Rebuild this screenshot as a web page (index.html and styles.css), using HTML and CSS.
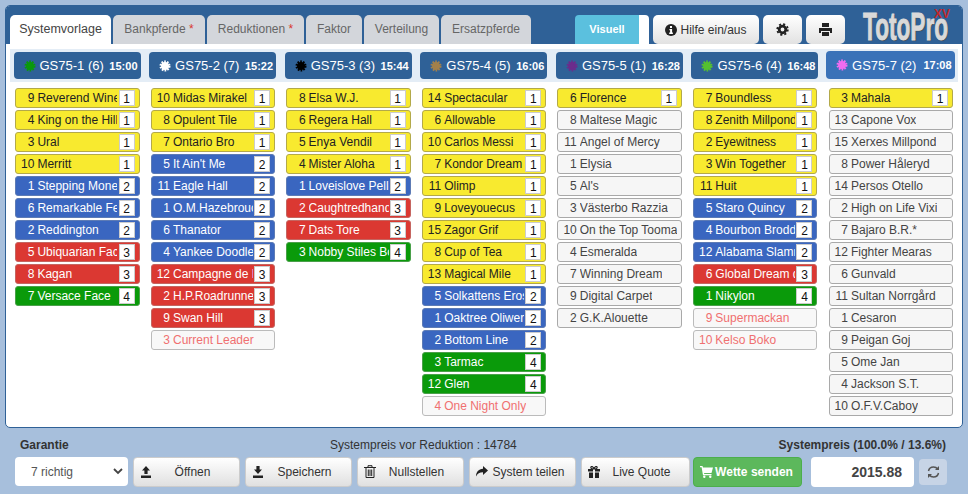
FILE: index.html
```html
<!DOCTYPE html>
<html lang="en">
<head>
    <meta charset="UTF-8">
    <title>TotoPro</title>
    <link rel="stylesheet" href="styles.css">
</head>
<body>
    <svg class="defs" width="0" height="0">
        <symbol id="burst" viewBox="0 0 16 16"><circle cx="8" cy="8" r="4.6" fill="currentColor" stroke="currentColor" stroke-width="3.4" stroke-dasharray="1.7 1.2"/></symbol>
    </svg>
    <div class="panel">
        <div class="topbar">
            <div class="tabs">
                <div class="tab active">Systemvorlage</div>
                <div class="tab">Bankpferde <span class="star">*</span></div>
                <div class="tab">Reduktionen <span class="star">*</span></div>
                <div class="tab">Faktor</div>
                <div class="tab">Verteilung</div>
                <div class="tab">Ersatzpferde</div>
            </div>
            <div class="tools">
                <div class="toggle"><span class="toggle-on">Visuell</span><span class="toggle-off"></span></div>
                <div class="tool help">
                    <svg width="12" height="12" viewBox="0 0 12 12"><circle cx="6" cy="6" r="6" fill="#222"/><rect x="5" y="2" width="2" height="2" fill="#fff"/><path d="M4.400 5h2.700v3.600h.8V10H4.200V8.600h.9V6.300h-.7z" fill="#fff"/></svg>
                    Hilfe ein/aus
                </div>
                <div class="tool square">
                    <svg width="13" height="13" viewBox="0 0 13 13"><circle cx="6.500" cy="6.500" r="3.300" fill="none" stroke="#222" stroke-width="2.800"/><circle cx="6.500" cy="6.500" r="5.300" fill="none" stroke="#222" stroke-width="1.800" stroke-dasharray="2.100 2.060"/></svg>
                </div>
                <div class="tool square">
                    <svg width="13" height="13" viewBox="0 0 13 13"><path d="M3 0h7v4H3zM0 5h13v5h-2V8H2v2H0zM3 9h7v4H3z" fill="#222"/></svg>
                </div>
            </div>
            <div class="logo"><span class="logo-text">TotoPro</span><span class="logo-xv">XV</span></div>
        </div>
        <div class="content">
            <div class="races">
                <div class="race"><svg class="dot dot-green" width="14" height="14"><use href="#burst"/></svg><span class="race-name">GS75-1 (6)</span><span class="race-time">15:00</span></div>
                <div class="race"><svg class="dot dot-white" width="14" height="14"><use href="#burst"/></svg><span class="race-name">GS75-2 (7)</span><span class="race-time">15:22</span></div>
                <div class="race"><svg class="dot dot-black" width="14" height="14"><use href="#burst"/></svg><span class="race-name">GS75-3 (3)</span><span class="race-time">15:44</span></div>
                <div class="race"><svg class="dot dot-brown" width="14" height="14"><use href="#burst"/></svg><span class="race-name">GS75-4 (5)</span><span class="race-time">16:06</span></div>
                <div class="race"><svg class="dot dot-purple" width="14" height="14"><use href="#burst"/></svg><span class="race-name">GS75-5 (1)</span><span class="race-time">16:28</span></div>
                <div class="race"><svg class="dot dot-lime" width="14" height="14"><use href="#burst"/></svg><span class="race-name">GS75-6 (4)</span><span class="race-time">16:48</span></div>
                <div class="race current"><svg class="dot dot-pink" width="14" height="14"><use href="#burst"/></svg><span class="race-name">GS75-7 (2)</span><span class="race-time">17:08</span></div>
            </div>
            <div class="columns">
                <div class="col">
                    <div class="horse yellow"><span class="no">9</span><span class="name">Reverend Wine</span><span class="rank">1</span></div>
                    <div class="horse yellow"><span class="no">4</span><span class="name">King on the Hill</span><span class="rank">1</span></div>
                    <div class="horse yellow"><span class="no">3</span><span class="name">Ural</span><span class="rank">1</span></div>
                    <div class="horse yellow"><span class="no">10</span><span class="name">Merritt</span><span class="rank">1</span></div>
                    <div class="horse blue"><span class="no">1</span><span class="name">Stepping Money</span><span class="rank">2</span></div>
                    <div class="horse blue"><span class="no">6</span><span class="name">Remarkable Fella</span><span class="rank">2</span></div>
                    <div class="horse blue"><span class="no">2</span><span class="name">Reddington</span><span class="rank">2</span></div>
                    <div class="horse red"><span class="no">5</span><span class="name">Ubiquarian Face</span><span class="rank">3</span></div>
                    <div class="horse red"><span class="no">8</span><span class="name">Kagan</span><span class="rank">3</span></div>
                    <div class="horse green"><span class="no">7</span><span class="name">Versace Face</span><span class="rank">4</span></div>
                </div>
                <div class="col">
                    <div class="horse yellow"><span class="no">10</span><span class="name">Midas Mirakel</span><span class="rank">1</span></div>
                    <div class="horse yellow"><span class="no">8</span><span class="name">Opulent Tile</span><span class="rank">1</span></div>
                    <div class="horse yellow"><span class="no">7</span><span class="name">Ontario Bro</span><span class="rank">1</span></div>
                    <div class="horse blue"><span class="no">5</span><span class="name">It Ain't Me</span><span class="rank">2</span></div>
                    <div class="horse blue"><span class="no">11</span><span class="name">Eagle Hall</span><span class="rank">2</span></div>
                    <div class="horse blue"><span class="no">1</span><span class="name">O.M.Hazebrouck</span><span class="rank">2</span></div>
                    <div class="horse blue"><span class="no">6</span><span class="name">Thanator</span><span class="rank">2</span></div>
                    <div class="horse blue"><span class="no">4</span><span class="name">Yankee Doodle</span><span class="rank">2</span></div>
                    <div class="horse red"><span class="no">12</span><span class="name">Campagne de Luxe</span><span class="rank">3</span></div>
                    <div class="horse red"><span class="no">2</span><span class="name">H.P.Roadrunner</span><span class="rank">3</span></div>
                    <div class="horse red"><span class="no">9</span><span class="name">Swan Hill</span><span class="rank">3</span></div>
                    <div class="horse out"><span class="no">3</span><span class="name">Current Leader</span></div>
                </div>
                <div class="col">
                    <div class="horse yellow"><span class="no">8</span><span class="name">Elsa W.J.</span><span class="rank">1</span></div>
                    <div class="horse yellow"><span class="no">6</span><span class="name">Regera Hall</span><span class="rank">1</span></div>
                    <div class="horse yellow"><span class="no">5</span><span class="name">Enya Vendil</span><span class="rank">1</span></div>
                    <div class="horse yellow"><span class="no">4</span><span class="name">Mister Aloha</span><span class="rank">1</span></div>
                    <div class="horse blue"><span class="no">1</span><span class="name">Loveislove Pellini</span><span class="rank">2</span></div>
                    <div class="horse red"><span class="no">2</span><span class="name">Caughtredhanded</span><span class="rank">3</span></div>
                    <div class="horse red"><span class="no">7</span><span class="name">Dats Tore</span><span class="rank">3</span></div>
                    <div class="horse green"><span class="no">3</span><span class="name">Nobby Stiles Boko</span><span class="rank">4</span></div>
                </div>
                <div class="col">
                    <div class="horse yellow"><span class="no">14</span><span class="name">Spectacular</span><span class="rank">1</span></div>
                    <div class="horse yellow"><span class="no">6</span><span class="name">Allowable</span><span class="rank">1</span></div>
                    <div class="horse yellow"><span class="no">10</span><span class="name">Carlos Messi</span><span class="rank">1</span></div>
                    <div class="horse yellow"><span class="no">7</span><span class="name">Kondor Dream</span><span class="rank">1</span></div>
                    <div class="horse yellow"><span class="no">11</span><span class="name">Olimp</span><span class="rank">1</span></div>
                    <div class="horse yellow"><span class="no">9</span><span class="name">Loveyouecus</span><span class="rank">1</span></div>
                    <div class="horse yellow"><span class="no">15</span><span class="name">Zagor Grif</span><span class="rank">1</span></div>
                    <div class="horse yellow"><span class="no">8</span><span class="name">Cup of Tea</span><span class="rank">1</span></div>
                    <div class="horse yellow"><span class="no">13</span><span class="name">Magical Mile</span><span class="rank">1</span></div>
                    <div class="horse blue"><span class="no">5</span><span class="name">Solkattens Eros</span><span class="rank">2</span></div>
                    <div class="horse blue"><span class="no">1</span><span class="name">Oaktree Oliwer</span><span class="rank">2</span></div>
                    <div class="horse blue"><span class="no">2</span><span class="name">Bottom Line</span><span class="rank">2</span></div>
                    <div class="horse green"><span class="no">3</span><span class="name">Tarmac</span><span class="rank">4</span></div>
                    <div class="horse green"><span class="no">12</span><span class="name">Glen</span><span class="rank">4</span></div>
                    <div class="horse out"><span class="no">4</span><span class="name">One Night Only</span></div>
                </div>
                <div class="col">
                    <div class="horse yellow"><span class="no">6</span><span class="name">Florence</span><span class="rank">1</span></div>
                    <div class="horse plain"><span class="no">8</span><span class="name">Maltese Magic</span></div>
                    <div class="horse plain"><span class="no">11</span><span class="name">Angel of Mercy</span></div>
                    <div class="horse plain"><span class="no">1</span><span class="name">Elysia</span></div>
                    <div class="horse plain"><span class="no">5</span><span class="name">Al's</span></div>
                    <div class="horse plain"><span class="no">3</span><span class="name">Västerbo Razzia</span></div>
                    <div class="horse plain"><span class="no">10</span><span class="name">On the Top Tooma</span></div>
                    <div class="horse plain"><span class="no">4</span><span class="name">Esmeralda</span></div>
                    <div class="horse plain"><span class="no">7</span><span class="name">Winning Dream</span></div>
                    <div class="horse plain"><span class="no">9</span><span class="name">Digital Carpet</span></div>
                    <div class="horse plain"><span class="no">2</span><span class="name">G.K.Alouette</span></div>
                </div>
                <div class="col">
                    <div class="horse yellow"><span class="no">7</span><span class="name">Boundless</span><span class="rank">1</span></div>
                    <div class="horse yellow"><span class="no">8</span><span class="name">Zenith Millpond</span><span class="rank">1</span></div>
                    <div class="horse yellow"><span class="no">2</span><span class="name">Eyewitness</span><span class="rank">1</span></div>
                    <div class="horse yellow"><span class="no">3</span><span class="name">Win Together</span><span class="rank">1</span></div>
                    <div class="horse yellow"><span class="no">11</span><span class="name">Huit</span><span class="rank">1</span></div>
                    <div class="horse blue"><span class="no">5</span><span class="name">Staro Quincy</span><span class="rank">2</span></div>
                    <div class="horse blue"><span class="no">4</span><span class="name">Bourbon Broddi</span><span class="rank">2</span></div>
                    <div class="horse blue"><span class="no">12</span><span class="name">Alabama Slammer</span><span class="rank">2</span></div>
                    <div class="horse red"><span class="no">6</span><span class="name">Global Dream d</span><span class="rank">3</span></div>
                    <div class="horse green"><span class="no">1</span><span class="name">Nikylon</span><span class="rank">4</span></div>
                    <div class="horse out"><span class="no">9</span><span class="name">Supermackan</span></div>
                    <div class="horse out"><span class="no">10</span><span class="name">Kelso Boko</span></div>
                </div>
                <div class="col">
                    <div class="horse yellow"><span class="no">3</span><span class="name">Mahala</span><span class="rank">1</span></div>
                    <div class="horse plain"><span class="no">13</span><span class="name">Capone Vox</span></div>
                    <div class="horse plain"><span class="no">15</span><span class="name">Xerxes Millpond</span></div>
                    <div class="horse plain"><span class="no">8</span><span class="name">Power Håleryd</span></div>
                    <div class="horse plain"><span class="no">14</span><span class="name">Persos Otello</span></div>
                    <div class="horse plain"><span class="no">2</span><span class="name">High on Life Vixi</span></div>
                    <div class="horse plain"><span class="no">7</span><span class="name">Bajaro B.R.*</span></div>
                    <div class="horse plain"><span class="no">12</span><span class="name">Fighter Mearas</span></div>
                    <div class="horse plain"><span class="no">6</span><span class="name">Gunvald</span></div>
                    <div class="horse plain"><span class="no">11</span><span class="name">Sultan Norrgård</span></div>
                    <div class="horse plain"><span class="no">1</span><span class="name">Cesaron</span></div>
                    <div class="horse plain"><span class="no">9</span><span class="name">Peigan Goj</span></div>
                    <div class="horse plain"><span class="no">5</span><span class="name">Ome Jan</span></div>
                    <div class="horse plain"><span class="no">4</span><span class="name">Jackson S.T.</span></div>
                    <div class="horse plain"><span class="no">10</span><span class="name">O.F.V.Caboy</span></div>
                </div>
            </div>
        </div>
    </div>
    <div class="footer">
        <div class="labels">
            <span class="label-left">Garantie</span>
            <span class="label-mid">Systempreis vor Reduktion : 14784</span>
            <span class="label-right">Systempreis (100.0% / 13.6%)</span>
        </div>
        <div class="controls">
            <div class="select">7 richtig
                <svg width="10" height="7" viewBox="0 0 10 7"><path d="M1 1l4 4 4-4" fill="none" stroke="#444" stroke-width="1.800"/></svg>
            </div>
            <div class="btn"><svg width="12" height="12" viewBox="0 0 12 12"><path d="M6 0l4 4.500H7.600V8H4.400V4.500H2zM1 9.500h10V12H1z" fill="#222"/></svg><span>Öffnen</span></div>
            <div class="btn"><svg width="12" height="12" viewBox="0 0 12 12"><path d="M4.400 0h3.200v3.500H10L6 8 2 3.500h2.400zM1 9.500h10V12H1z" fill="#222"/></svg><span>Speichern</span></div>
            <div class="btn"><svg width="12" height="13" viewBox="0 0 12 13"><path d="M0 2.500h12M4 2.500V.7h4v1.800M2 3v9.500h8V3M4.300 4.500v6.500M6 4.500v6.500M7.700 4.500v6.500" fill="none" stroke="#222"/></svg><span>Nullstellen</span></div>
            <div class="btn"><svg width="12" height="11" viewBox="0 0 12 11"><path d="M7 0l5 4.500L7 9V6.300C3.500 6.300 1.500 7.500 0 10.500 0 6 2.500 3 7 2.700z" fill="#222"/></svg><span>System teilen</span></div>
            <div class="btn btn-wide"><svg width="12" height="12" viewBox="0 0 12 12"><path d="M0 3h5v2.500H0zM7 3h5v2.500H7zM1 6.500h4V12H1zM7 6.500h4V12H7z" fill="#222"/><path d="M5.500 3C3.500 3 2.500 2 3 1s2.500-.5 3 2c.5-2.500 2.500-3 3-2s-.5 2-2.500 2z" fill="none" stroke="#222" stroke-width="1.200"/></svg><span>Live Quote</span></div>
            <div class="btn btn-send"><svg width="13" height="12" viewBox="0 0 13 12"><path d="M0 0h2.500l.5 1.500h10L11.500 7H4l.3 1h7.200v1.200H3L1.600 1.300H0z" fill="#fff"/><circle cx="4.300" cy="10.800" r="1.200" fill="#fff"/><circle cx="10.300" cy="10.800" r="1.200" fill="#fff"/></svg><span>Wette senden</span></div>
            <div class="price">2015.88</div>
            <div class="refresh"><svg width="13" height="12" viewBox="0 0 13 12"><path d="M1.500 5C2 2.500 4 1 6.500 1c1.800 0 3.200.7 4.200 2M11.500 7c-.5 2.500-2.500 4-5 4-1.800 0-3.200-.7-4.200-2" fill="none" stroke="#555" stroke-width="1.500"/><path d="M12 0v4H8zM1 12V8h4z" fill="#555"/></svg></div>
        </div>
    </div>
</body>
</html>
```

FILE: styles.css
```css
* {
    box-sizing: border-box;
    margin: 0;
    padding: 0;
}
body {
    font-family: "Liberation Sans", Arial, sans-serif;
    font-size: 12px;
    background-color: #a7bfdc;
    color: #333;
    height: 494px;
    overflow: hidden;
    padding: 5px 5px 0;
}
.defs {
    display: block;
    height: 0;
}

.panel {
    width: 958px;
    height: 423px;
    border: 1px solid #2f6197;
    border-radius: 5px;
    background: #fff;
    overflow: hidden;
}
.topbar {
    position: relative;
    height: 38px;
    background: #2f6197;
    padding: 9px 0 0 4px;
    display: flex;
}
.tabs {
    flex: none;
    display: grid;
    grid-template-columns: 101px 92px 97px 56px 75px 90px;
    gap: 2px;
    width: 565px;
}
.tab {
    height: 29px;
    line-height: 28px;
    text-align: center;
    color: #666;
    background: #d3d6db;
    border-radius: 5px 5px 0 0;
    white-space: nowrap;
}
.tab.active {
    font-size: 12.5px;
    background: #fff;
    color: #444;
}
.star {
    color: #d9362e;
}
.tools {
    flex: none;
    display: flex;
    gap: 4px;
    height: 29px;
}
.toggle {
    display: flex;
    width: 74px;
    border-radius: 4px 4px 0 0;
    overflow: hidden;
}
.toggle-on {
    flex: 1;
    background: #5bc0de;
    color: #fff;
    font-size: 11px;
    font-weight: bold;
    text-align: center;
    line-height: 29px;
}
.toggle-off {
    width: 10px;
    background: #fff;
}
.tool {
    display: flex;
    align-items: center;
    justify-content: center;
    gap: 3px;
    background: linear-gradient(#fff, #e2e2e2);
    border-radius: 5px;
    color: #333;
}
.help {
    width: 106px;
}
.square {
    width: 39px;
}
.logo {
    position: absolute;
    left: 857px;
    top: 3px;
    width: 88px;
    height: 36px;
}
.logo-text {
    display: block;
    font-weight: bold;
    font-size: 39px;
    line-height: 36px;
    color: #d9d9d9;
    white-space: nowrap;
    transform: scaleX(.58);
    transform-origin: left top;
    -webkit-text-stroke: 1px #d9d9d9;
    text-shadow: 1px 1px 1px #444;
}
.logo-xv {
    position: absolute;
    right: 1px;
    top: 1px;
    font-size: 12px;
    font-weight: bold;
    line-height: 9px;
    color: #c0282a;
}

.content {
    padding: 5px 4px 0;
}
.races {
    display: grid;
    grid-template-columns: repeat(7, 127px);
    gap: 8.6px;
    height: 33px;
    padding: 3px 0 0 3.5px;
    background: #e4edf6;
    align-items: start;
}
.race {
    display: flex;
    align-items: center;
    height: 27px;
    padding-left: 9px;
    background: #2f6197;
    border-radius: 4px;
    color: #fff;
}
.race.current {
    height: 28px;
    margin: -1px 0 0 -1px;
    background: #3a72b8;
    width: 128.500px;
}
.dot {
    flex: none;
    margin-right: 3px;
}
.dot-green { color: #0a9a0a; }
.dot-white { color: #fff; }
.dot-black { color: #000; }
.dot-brown { color: #a3804a; }
.dot-purple { color: #6b2c8c; }
.dot-lime { color: #55c030; }
.dot-pink { color: #f06cf0; }
.race-name {
    font-size: 13px;
    white-space: nowrap;
}
.race-time {
    margin-left: auto;
    padding-right: 3px;
    font-size: 11px;
    font-weight: bold;
}

.columns {
    display: grid;
    grid-template-columns: repeat(7, 124.5px);
    gap: 11.1px;
    padding: 6px 0 0 5px;
}
.col {
    display: flex;
    flex-direction: column;
    gap: 2px;
}
.horse {
    position: relative;
    display: flex;
    align-items: center;
    height: 20px;
    padding-left: 5px;
    border: 1px solid #a9a9a9;
    border-radius: 3px;
    white-space: nowrap;
}
.no {
    flex: none;
    width: 13.400px;
    text-align: right;
    margin-right: 3px;
}
.name {
    flex: none;
    width: 80px;
    overflow: hidden;
}
.rank {
    position: absolute;
    right: 4px;
    top: 1px;
    width: 16px;
    height: 16px;
    line-height: 16px;
    text-align: center;
    color: #111;
    background: #fff;
    border: 1px solid #ccc;
}
.yellow {
    background: #f8ea2f;
    border-color: #b3a94a;
    color: #222;
}
.blue {
    background: #3a66c0;
    border-color: #5d7bb5;
    color: #fff;
}
.red {
    background: #db3832;
    border-color: #c56560;
    color: #fff;
}
.green {
    background: #0a9a0a;
    border-color: #4aa04a;
    color: #fff;
}
.plain {
    background: #f6f6f6;
    color: #444;
}
.plain .name,
.out .name {
    width: auto;
}
.out {
    background: #f8f8f8;
    border-color: #bbb;
    color: #f07070;
}

.footer {
    padding: 11px 10px 0;
}
.labels {
    display: flex;
    height: 13px;
    line-height: 13px;
}
.label-left {
    width: 315px;
    padding-left: 5px;
    font-weight: bold;
}
.label-right {
    margin-left: auto;
    font-weight: bold;
    white-space: nowrap;
    padding-right: 7px;
}
.controls {
    display: flex;
    align-items: center;
    height: 31px;
    margin-top: 4px;
}
.select {
    display: flex;
    align-items: center;
    justify-content: space-between;
    width: 113px;
    height: 29px;
    margin-right: 5px;
    padding: 0 5px 0 16px;
    background: #fff;
    border-radius: 4px;
    color: #555;
}
.btn {
    display: flex;
    align-items: center;
    width: 107px;
    height: 30px;
    margin-right: 5px;
    padding: 0 6px;
    background: linear-gradient(#fff, #e0e0e0);
    border: 1px solid #ccc;
    border-radius: 4px;
    color: #333;
}
.btn span {
    flex: 1;
    text-align: center;
}
.btn-wide {
    width: 109px;
    margin-right: 3px;
}
.btn-send {
    width: 109px;
    margin-right: 9px;
    background: #5cb85c;
    border-color: #4cae4c;
    color: #fff;
    font-weight: bold;
}
.price {
    width: 103px;
    height: 30px;
    line-height: 30px;
    padding-right: 12px;
    text-align: right;
    font-size: 14px;
    font-weight: bold;
    color: #444;
    background: #fff;
    border-radius: 4px;
    margin-right: 5px;
}
.refresh {
    display: flex;
    align-items: center;
    justify-content: center;
    width: 28px;
    height: 26px;
    background: #c7d4e6;
    border-radius: 4px;
}
```
